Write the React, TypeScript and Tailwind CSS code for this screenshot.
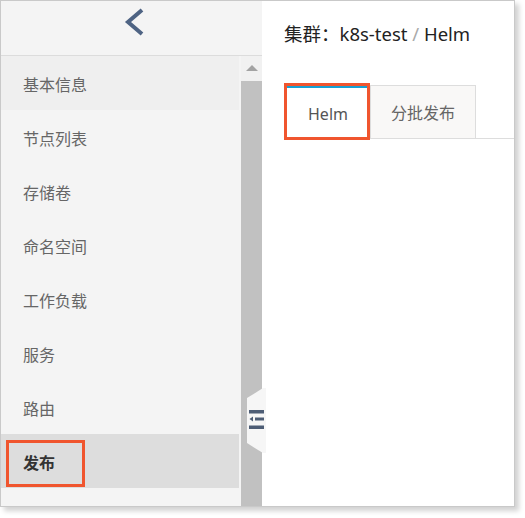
import React from 'react';

const menu = ['基本信息', '节点列表', '存储卷', '命名空间', '工作负载', '服务', '路由', '发布'];

export default function App() {
  return (
    <div className="w-[525px] h-[518px] bg-white font-['Noto_Sans','Noto_Sans_CJK_SC',sans-serif]">
      <div className="relative flex w-[515px] h-[507px] border border-[#c9c9c9] bg-white shadow-[4px_4px_5px_rgba(0,0,0,0.18)]">
        {/* sidebar */}
        <aside className="flex flex-col w-[261px] bg-[#f4f4f4]">
          <div className="h-[55px] border-b border-[#dcdcdc] flex pl-[123px] pt-[6px]">
            <svg width="22" height="30" viewBox="0 0 22 30">
              <polyline points="18,3 4,15 18,27" fill="none" stroke="#4e6383" strokeWidth="4" />
            </svg>
          </div>
          <div className="flex flex-1 min-h-0">
            <ul className="w-[238px] mr-[2px]">
              {menu.map((m, i) => (
                <li
                  key={m}
                  className={
                    'h-[54px] flex items-center pl-[22px] pt-[3px] text-[16px] ' +
                    (i === 0 ? 'bg-[#efefef] text-[#666]' : i === 7 ? 'bg-[#dddddd] text-[#333] font-bold' : 'text-[#666]')
                  }
                >
                  {m}
                </li>
              ))}
            </ul>
            <div className="w-[21px] flex flex-col bg-[#f1f1f1]">
              <div className="h-[25px] flex justify-center pt-[9px]">
                <div className="w-0 h-0 border-l-[6px] border-r-[6px] border-b-[6px] border-l-transparent border-r-transparent border-b-[#a3a3a3]" />
              </div>
              <div className="flex-1 bg-[#c1c1c1]" />
            </div>
          </div>
        </aside>

        {/* main */}
        <main className="flex-1 flex flex-col">
          <h1 className="h-[64px] pl-[22px] pt-[20px] text-[18.5px] text-[#222] leading-[26px]">
            集群：k8s-test <span className="text-[#aaa]">/</span> Helm
          </h1>
          <div className="ml-[22px] mt-[20px] h-[54px] flex border-b border-[#dddddd]">
            <div className="w-[84px] ml-[2px] pt-[2px] bg-white border-t-[3px] border-[#16a0d4] flex items-center justify-center text-[16px] text-[#555]">
              Helm
            </div>
            <div className="w-[106px] pt-[2px] bg-[#f9f8f7] border border-b-0 border-[#dddddd] flex items-center justify-center text-[16px] text-[#666]">
              分批发布
            </div>
          </div>
        </main>

        {/* collapse handle */}
        <svg className="absolute left-[245px] top-[387px]" width="20" height="66" viewBox="0 0 20 66">
          <polygon points="17,0 1,10 1,55 17,65 20,65 20,0" fill="#f6f6f6" />
          <rect x="3" y="22" width="15" height="3.5" fill="#4d5d75" />
          <polygon points="7,28.5 3.5,31 7,33.5" fill="#4d5d75" />
          <rect x="9" y="29.5" width="9" height="3" fill="#4d5d75" />
          <rect x="3" y="37.5" width="15" height="3.5" fill="#4d5d75" />
        </svg>

        {/* annotation boxes */}
        <div className="absolute left-[283px] top-[82px] w-[86px] h-[57px] border-[3px] border-[#f0552e]" />
        <div className="absolute left-[5px] top-[439px] w-[79px] h-[47px] border-[3px] border-[#f0552e]" />
      </div>
    </div>
  );
}
